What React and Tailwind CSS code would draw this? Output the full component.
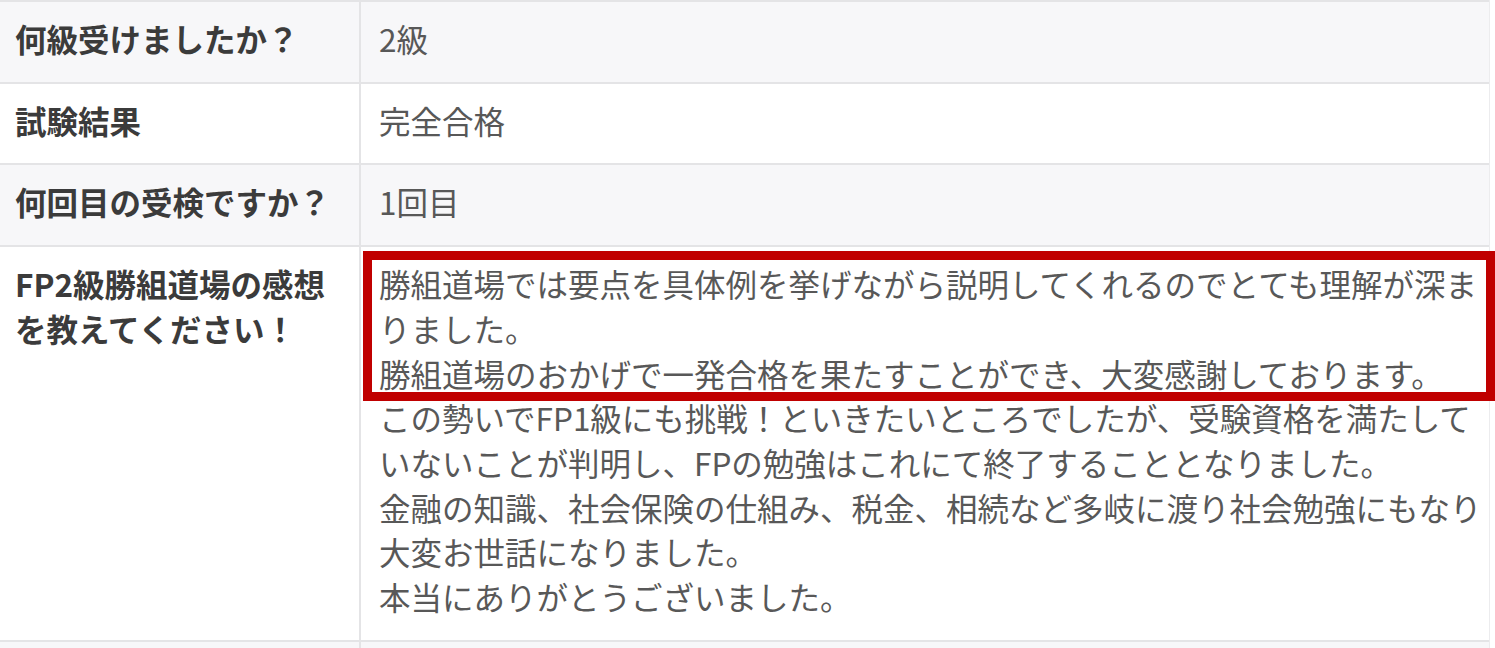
const rows = [
  { label: ['何級受けましたか？'], value: ['2級'], bg: 'bg-[#f7f7f9]' },
  { label: ['試験結果'], value: ['完全合格'], bg: 'bg-white' },
  { label: ['何回目の受検ですか？'], value: ['1回目'], bg: 'bg-[#f7f7f9]' },
  {
    label: ['FP2級勝組道場の感想', 'を教えてください！'],
    value: [
      '勝組道場では要点を具体例を挙げながら説明してくれるのでとても理解が深ま',
      'りました。',
      '勝組道場のおかげで一発合格を果たすことができ、大変感謝しております。',
      'この勢いでFP1級にも挑戦！といきたいところでしたが、受験資格を満たして',
      'いないことが判明し、FPの勉強はこれにて終了することとなりました。',
      '金融の知識、社会保険の仕組み、税金、相続など多岐に渡り社会勉強にもなり',
      '大変お世話になりました。',
      '本当にありがとうございました。',
    ],
    bg: 'bg-white',
  },
];

const Row = ({ label, value, bg }) => (
  <div className={`flex border-t-2 border-[#e4e4e6] ${bg}`}>
    <div className="w-[361px] shrink-0 border-r-2 border-[#e4e4e6] pl-[15px] pr-2 pt-[14px] pb-[21px] font-bold text-[#3b3b3b]">
      {label.map((l, i) => (
        <div key={i} className="whitespace-nowrap">{l}</div>
      ))}
    </div>
    <div className="flex-1 pl-[18px] pr-3 pt-[14px] pb-[21px] text-[#585858]">
      {value.map((v, i) => (
        <div key={i} className="whitespace-nowrap">{v}</div>
      ))}
    </div>
  </div>
);

export default function App() {
  return (
    <div className="w-[1495px] h-[648px] overflow-hidden bg-white">
      <div
        className="relative w-[1490px] border-r border-[#ececee] text-[31.5px] leading-[44.7px]"
        style={{ fontFamily: '"Noto Sans CJK JP", "Noto Sans", sans-serif' }}
      >
        {rows.map((r, i) => (
          <Row key={i} {...r} />
        ))}
        <div className="flex border-t-2 border-[#e4e4e6] bg-[#f7f7f9] h-[60px]">
          <div className="w-[361px] shrink-0 border-r-2 border-[#e4e4e6]" />
          <div className="flex-1" />
        </div>
        <div className="absolute left-[363px] top-[251px] w-[1132px] h-[150px] border-[9px] border-[#c00000]" />
      </div>
    </div>
  );
}
